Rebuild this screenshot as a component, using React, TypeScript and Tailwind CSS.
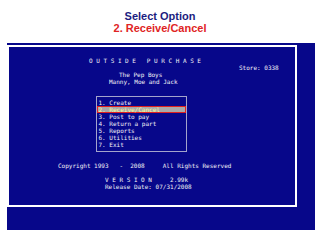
import React from "react";

const menu = [
  "1. Create",
  "2. Receive/Cancel",
  "3. Post to pay",
  "4. Return a part",
  "5. Reports",
  "6. Utilities",
  "7. Exit",
];

export default function App() {
  return (
    <div className="w-[320px] h-[240px] bg-white overflow-hidden">
      {/* Caption */}
      <div className="pt-[10px] text-center font-bold text-[11px] leading-[12px] font-['Liberation_Sans',Arial,sans-serif]">
        <div className="text-[#1c1c80]">Select Option</div>
        <div className="text-[#e02424]">2. Receive/Cancel</div>
      </div>

      {/* DOS screen */}
      <div className="mt-[9px] ml-[7px] w-[308px] h-[187px] bg-[#07078a] pt-[2px]">
        <div className="w-[290px] h-[162px] border-2 border-white bg-[#07078a] pt-[9.5px] text-[6px] leading-[7px] text-[#f2f2f6] whitespace-pre font-['DejaVu_Sans_Mono','Liberation_Mono',monospace]">
          <div className="h-[7px] pl-[80px]">O U T S I D E   P U R C H A S E</div>
          <div className="h-[7px] pl-[230px]">Store: 0338</div>
          <div className="h-[7px] pl-[110px]">The Pep Boys</div>
          <div className="h-[7px] pl-[100px]">Manny, Moe and Jack</div>

          <div className="mt-[11.5px] ml-[87px] w-[91px] h-[56px] border border-[#a4a4cc] pt-[1.5px]">
            {menu.map((item, i) =>
              i === 1 ? (
                <div
                  key={item}
                  className="h-[7px] leading-[5px] pl-[0.5px] bg-[#a9a9a9] border border-[#e02020] text-[#ffff9a]"
                >
                  {item}
                </div>
              ) : (
                <div key={item} className="h-[7px] pl-[1.5px]">
                  {item}
                </div>
              )
            )}
          </div>

          <div className="mt-[9.5px] h-[7px] pl-[49px]">Copyright 1993   -  2008     All Rights Reserved</div>
          <div className="mt-[7px] h-[7px] pl-[96px]">V E R S I O N     2.99k</div>
          <div className="h-[7px] pl-[96px]">Release Date: 07/31/2008</div>
        </div>
      </div>
    </div>
  );
}
